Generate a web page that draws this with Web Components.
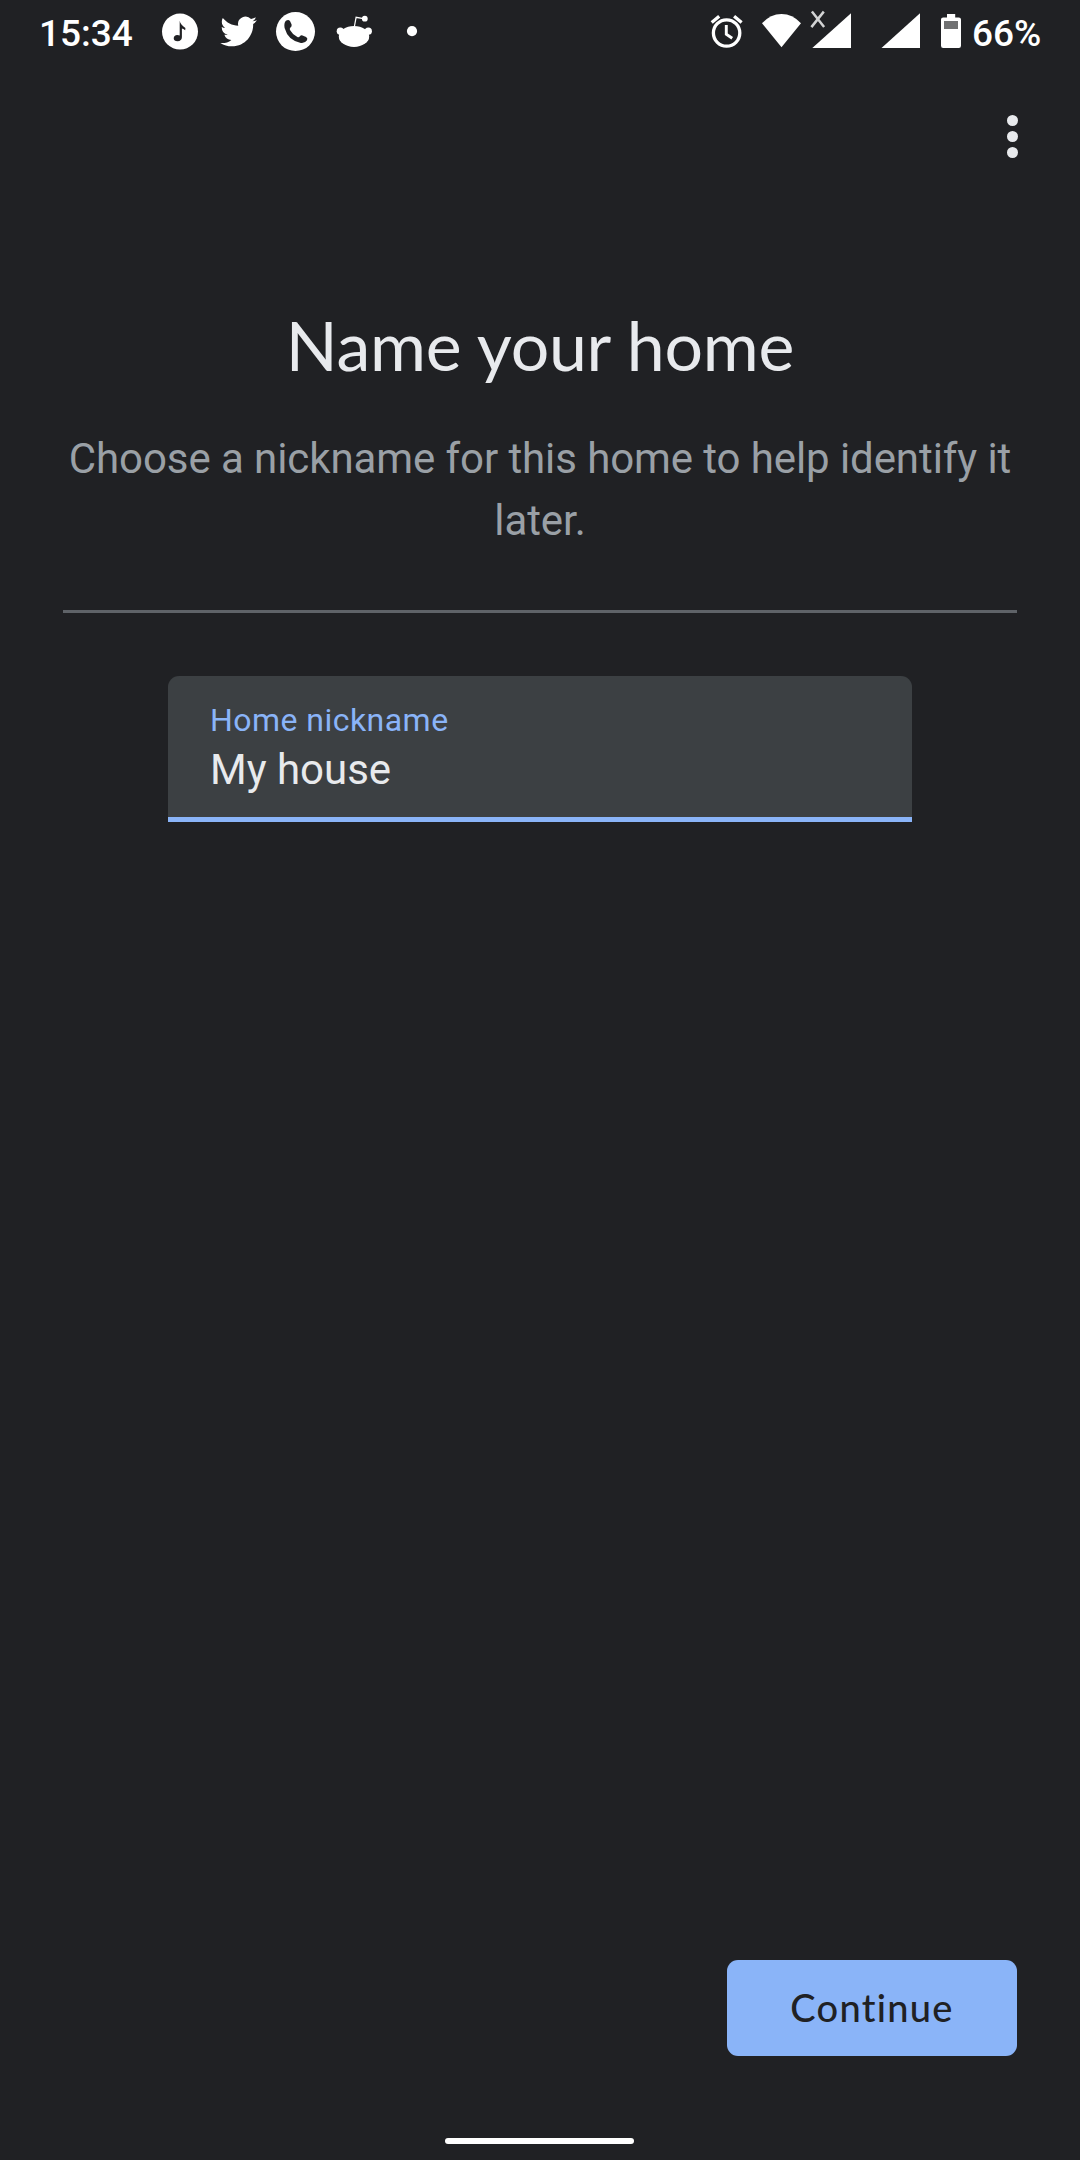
<!DOCTYPE html>
<html lang="en">
<head>
<meta charset="utf-8">
<title>Name your home</title>
<style>
html,body{margin:0;height:100%;background:#202124}
body{font-family:Roboto,sans-serif;color:#e8eaed}
</style>
</head>
<body>
<home-setup></home-setup>
<script>
const define = (name, html) => customElements.define(name, class extends HTMLElement {
  connectedCallback() {
    if (this.shadowRoot) return;
    const t = document.createElement('template');
    t.innerHTML = html;
    this.attachShadow({mode: 'open'}).appendChild(t.content.cloneNode(true));
  }
});

define('status-bar', `
<style>
:host{display:flex;justify-content:space-between;height:64px;padding:0 39px 0 39px;color:#fff;font:500 37px/44px Roboto,sans-serif;box-sizing:border-box}
.g{display:flex;align-items:flex-start}
svg{display:block;flex:none;fill:#fff}
.t{padding-top:12px;white-space:nowrap}
.time{width:121px}
.pct{width:69px}
</style>
<div class="g">
  <span class="t time">15:34</span>
  <svg width="58" height="64" viewBox="160 0 58 64"><circle cx="180" cy="31.6" r="18"/><path fill="#202124" d="M179.7 20.8 Q180.4 24.8 185.4 28 L185.2 30.2 Q183.3 28.7 181.9 28.4 V37.2 Q181.7 40.9 177.6 41.2 Q173.8 41.1 173.7 38.2 Q174 35.2 177.2 35 Q178.8 35 179.7 35.5Z"/></svg>
  <svg width="54" height="64" viewBox="218 0 54 64"><path transform="translate(220.3 13.2) scale(1.525)" d="M23.953 4.57a10 10 0 01-2.825.775 4.958 4.958 0 002.163-2.723c-.951.555-2.005.959-3.127 1.184a4.92 4.92 0 00-8.384 4.482C7.69 8.095 4.067 6.13 1.64 3.162a4.822 4.822 0 00-.666 2.475c0 1.71.87 3.213 2.188 4.096a4.904 4.904 0 01-2.228-.616v.06a4.923 4.923 0 003.946 4.827 4.996 4.996 0 01-2.212.085 4.936 4.936 0 004.604 3.417 9.867 9.867 0 01-6.102 2.105c-.39 0-.779-.023-1.17-.067a13.995 13.995 0 007.557 2.209c9.053 0 13.998-7.496 13.998-13.985 0-.21 0-.42-.015-.63A9.935 9.935 0 0024 4.59z"/></svg>
  <svg width="58" height="64" viewBox="272 0 58 64"><circle cx="295.5" cy="31.6" r="19.5"/><path fill="#202124" d="M285.9 20.8 Q288.6 19.1 290.1 21.3 L291.6 24.6 Q292.2 26.3 290.3 27.8 Q289.4 28.7 290 29.9 Q292.5 34.5 297.4 37 Q298.8 37.7 299.7 36.5 Q301 34.7 302.5 35.4 L306.1 37.1 Q308.1 38.4 307 40.3 Q304.9 43.5 300.8 42.9 Q288.1 40.8 284.6 28.1 Q283.7 23.1 285.9 20.8Z"/></svg>
  <svg width="66" height="64" viewBox="330 0 66 64"><ellipse cx="354" cy="36.4" rx="15.2" ry="10.5"/><circle cx="340.3" cy="31.2" r="3.6"/><circle cx="368.3" cy="31.2" r="3.6"/><path d="M354.3 27 L356.1 17.3 L363.5 18.6" fill="none" stroke="#fff" stroke-width="1.2"/><circle cx="364.8" cy="18.7" r="2.9"/></svg>
  <svg width="32" height="64" viewBox="396 0 32 64"><circle cx="412" cy="31.1" r="5.1"/></svg>
</div>
<div class="g">
  <svg width="48" height="64" viewBox="706 0 48 64"><circle cx="726.6" cy="33" r="13.2" fill="none" stroke="#fff" stroke-width="3.3"/><path d="M726.3 25 V34.2 L732.2 38.2" fill="none" stroke="#fff" stroke-width="2.9"/><path d="M711.7 22.4 L719.2 16.2 M741.6 22.4 L734.1 16.2" fill="none" stroke="#fff" stroke-width="3.3"/></svg>
  <svg width="52" height="64" viewBox="754 0 52 64"><path d="M762 23.3 Q770.5 14 781.5 14 Q792.5 14 801 23.3 L781.5 47.2Z"/></svg>
  <svg width="64" height="64" viewBox="806 0 64 64"><path d="M811.9 11.6 L824.1 27.1 M823.8 11.6 L811.4 27.1" fill="none" stroke="#d2d3d4" stroke-width="2.5"/><path d="M851 13.3 V48 H812.3Z"/></svg>
  <svg width="62" height="64" viewBox="870 0 62 64"><path d="M920 13.3 V48 H881.5Z"/></svg>
  <svg width="40" height="64" viewBox="932 0 40 64"><path d="M947 14 H955.2 V17.4 H958.8 Q961 17.4 961 19.6 V45.8 Q961 48 958.8 48 H943.2 Q941 48 941 45.8 V19.6 Q941 17.4 943.2 17.4 H947Z"/><path fill="#707172" d="M944 21 H958 V29 H944Z"/></svg>
  <span class="t pct">66%</span>
</div>`);

define('app-toolbar', `
<style>
:host{display:flex;justify-content:flex-end;align-items:center;height:145px;padding-right:62px;box-sizing:border-box}
button{all:unset;display:flex;flex-direction:column;gap:5px;width:11px}
i{width:11px;height:11px;border-radius:50%;background:#e8eaed}
</style>
<button aria-label="More options"><i></i><i></i><i></i></button>`);

define('page-header', `
<style>
:host{display:block;margin:0 63px;padding-top:96px;text-align:center;border-bottom:3px solid #5f6368;height:305px}
h1{margin:0;font:400 68px/80px Lato,sans-serif;letter-spacing:-.25px;color:#e8eaed;white-space:nowrap}
p{margin:43px 0 0;font:400 42px/62px Roboto,sans-serif;letter-spacing:-.085px;color:#9aa0a6}
</style>
<h1><slot name="title"></slot></h1>
<p><slot></slot></p>`);

define('text-field', `
<style>
:host{display:flex;flex-direction:column;margin:63px 168px 0;height:146px;box-sizing:border-box;background:#3c4043;border-bottom:5px solid #8ab4f8;border-radius:11px 11px 0 0;padding:24px 42px 0}
.l{font:400 32px/40px Roboto,sans-serif;letter-spacing:.46px;color:#8ab4f8}
.v{font:400 42px/50px Roboto,sans-serif;color:#e8eaed;margin-top:5px}
</style>
<span class="l"><slot name="label"></slot></span>
<span class="v"><slot></slot></span>`);

define('primary-button', `
<style>
:host{display:block}
button{all:unset;box-sizing:border-box;display:flex;align-items:center;justify-content:center;width:290px;height:96px;padding-bottom:2px;border-radius:11px;background:#8ab4f8;color:#202124;font:500 38px/46px Lato,sans-serif;letter-spacing:1.29px}
</style>
<button><slot></slot></button>`);

define('gesture-bar', `
<style>
:host{display:flex;justify-content:center;height:104px;padding:82px 1px 0 0;box-sizing:border-box}
i{width:189px;height:6px;border-radius:3px;background:#fff}
</style><i></i>`);

define('home-setup', `
<style>
:host{display:flex;flex-direction:column;width:1080px;height:2160px;overflow:hidden;background:#202124}
footer{display:flex;justify-content:flex-end;margin-top:auto;padding-right:63px}
</style>
<status-bar></status-bar>
<app-toolbar></app-toolbar>
<page-header><span slot="title">Name your home</span>Choose a nickname for this home to help identify it later.</page-header>
<text-field><span slot="label">Home nickname</span>My house</text-field>
<footer><primary-button>Continue</primary-button></footer>
<gesture-bar></gesture-bar>`);
</script>
</body>
</html>
